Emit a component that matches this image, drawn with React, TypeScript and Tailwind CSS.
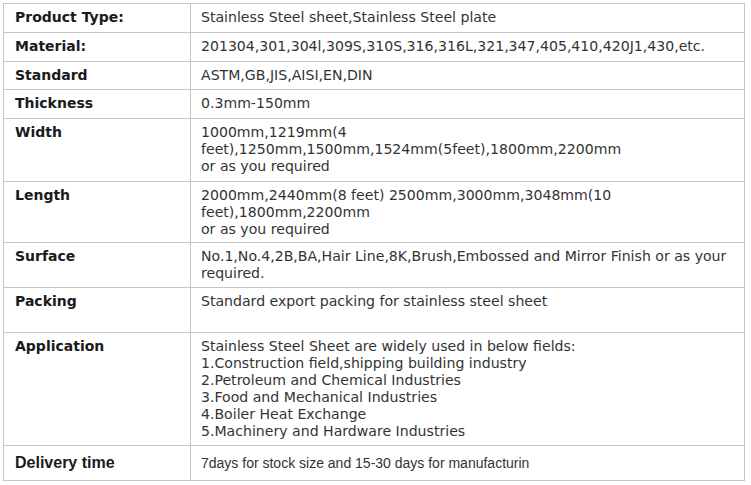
import React from "react";

type Row = { label: string; lines: string[]; h: number; arial?: boolean };

const rows: Row[] = [
  { label: "Product Type:", lines: ["Stainless Steel sheet,Stainless Steel plate"], h: 29 },
  { label: "Material:", lines: ["201304,301,304l,309S,310S,316,316L,321,347,405,410,420J1,430,etc."], h: 29 },
  { label: "Standard", lines: ["ASTM,GB,JIS,AISI,EN,DIN"], h: 28 },
  { label: "Thickness", lines: ["0.3mm-150mm"], h: 29 },
  {
    label: "Width",
    lines: ["1000mm,1219mm(4", "feet),1250mm,1500mm,1524mm(5feet),1800mm,2200mm", "or as you required"],
    h: 63,
  },
  {
    label: "Length",
    lines: ["2000mm,2440mm(8 feet) 2500mm,3000mm,3048mm(10", "feet),1800mm,2200mm", "or as you required"],
    h: 61,
  },
  {
    label: "Surface",
    lines: ["No.1,No.4,2B,BA,Hair Line,8K,Brush,Embossed and Mirror Finish or as your", "required."],
    h: 45,
  },
  { label: "Packing", lines: ["Standard export packing for stainless steel sheet"], h: 45 },
  {
    label: "Application",
    lines: [
      "Stainless Steel Sheet are widely used in below fields:",
      "1.Construction field,shipping building industry",
      "2.Petroleum and Chemical Industries",
      "3.Food and Mechanical Industries",
      "4.Boiler Heat Exchange",
      "5.Machinery and Hardware Industries",
    ],
    h: 113,
  },
  { label: "Delivery time", lines: ["7days for stock size and 15-30 days for manufacturin"], h: 35, arial: true },
];

export default function App() {
  return (
    <div className="w-[751px] h-[485px] bg-white pt-[3px] pl-[3px]">
      <div className="w-[742px] border border-[#c6c6c6] border-b-0">
        {rows.map((r, i) => (
          <div
            key={i}
            className="flex border-b border-[#c6c6c6]"
            style={{ height: r.h }}
          >
            <div
              className={
                r.arial
                  ? "w-[187px] shrink-0 border-r border-[#c6c6c6] pl-[11px] pt-[8px] text-[16px] leading-[17px] font-bold text-[#1a1a1a] [font-family:'Liberation_Sans',Arial,sans-serif]"
                  : "w-[187px] shrink-0 border-r border-[#c6c6c6] pl-[11px] pt-[5px] text-[14px] leading-[17px] font-bold text-[#1a1a1a] [font-family:'DejaVu_Sans',Verdana,sans-serif]"
              }
            >
              {r.label}
            </div>
            <div
              className={
                r.arial
                  ? "flex-1 pl-[10px] pt-[9px] text-[14px] leading-[17px] text-[#333333] [font-family:'Liberation_Sans',Arial,sans-serif]"
                  : "flex-1 pl-[10px] pt-[5px] text-[14.1px] leading-[17px] text-[#333333] [font-family:'DejaVu_Sans',Verdana,sans-serif]"
              }
            >
              {r.lines.map((l, j) => (
                <div key={j} className="whitespace-nowrap">
                  {l}
                </div>
              ))}
            </div>
          </div>
        ))}
      </div>
    </div>
  );
}
